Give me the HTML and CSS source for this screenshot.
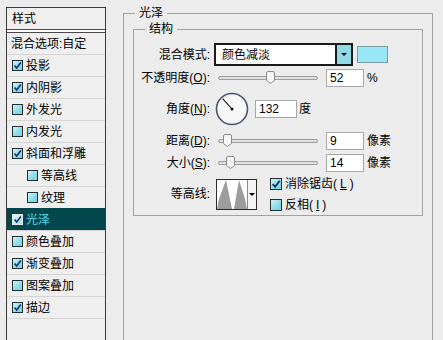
FILE: index.html
```html
<!DOCTYPE html>
<html lang="zh-CN">
<head>
<meta charset="utf-8">
<title>图层样式 - 光泽</title>
<link rel="stylesheet" href="styles.css">
</head>
<body>
<div class="dialog">
  <div class="styles-panel">
    <div class="panel-head">样式</div>
    <div class="panel-sep"></div>
    <div class="panel-blend">混合选项:自定</div>
    <div class="panel-row"><span class="cb"><svg viewBox="0 0 9 9" width="9" height="9"><path d="M1.5 4.5 L3.7 7 L7.8 1.5" fill="none" stroke="#10306a" stroke-width="1.6"/></svg></span>投影</div>
    <div class="panel-row"><span class="cb"><svg viewBox="0 0 9 9" width="9" height="9"><path d="M1.5 4.5 L3.7 7 L7.8 1.5" fill="none" stroke="#10306a" stroke-width="1.6"/></svg></span>内阴影</div>
    <div class="panel-row"><span class="cb"></span>外发光</div>
    <div class="panel-row"><span class="cb"></span>内发光</div>
    <div class="panel-row"><span class="cb"><svg viewBox="0 0 9 9" width="9" height="9"><path d="M1.5 4.5 L3.7 7 L7.8 1.5" fill="none" stroke="#10306a" stroke-width="1.6"/></svg></span>斜面和浮雕</div>
    <div class="panel-row sub"><span class="cb"></span>等高线</div>
    <div class="panel-row sub"><span class="cb"></span>纹理</div>
    <div class="panel-row sel"><span class="cb cb-sel"><svg viewBox="0 0 9 9" width="9" height="9"><path d="M1.5 4.5 L3.7 7 L7.8 1.5" fill="none" stroke="#10306a" stroke-width="1.6"/></svg></span>光泽</div>
    <div class="panel-row"><span class="cb"></span>颜色叠加</div>
    <div class="panel-row"><span class="cb"><svg viewBox="0 0 9 9" width="9" height="9"><path d="M1.5 4.5 L3.7 7 L7.8 1.5" fill="none" stroke="#10306a" stroke-width="1.6"/></svg></span>渐变叠加</div>
    <div class="panel-row"><span class="cb"></span>图案叠加</div>
    <div class="panel-row"><span class="cb"><svg viewBox="0 0 9 9" width="9" height="9"><path d="M1.5 4.5 L3.7 7 L7.8 1.5" fill="none" stroke="#10306a" stroke-width="1.6"/></svg></span>描边</div>
    <div class="panel-fill"></div>
  </div>

  <div class="main">
    <fieldset class="group outer">
      <legend>光泽</legend>
      <fieldset class="group inner">
        <legend>结构</legend>

        <div class="row r-blend">
          <span class="lbl">混合模式:</span>
          <div class="select">
            <span class="select-text">颜色减淡</span>
            <span class="select-btn"><span class="arrow"></span></span>
          </div>
          <span class="swatch"></span>
        </div>

        <div class="row r-opacity">
          <span class="lbl">不透明度(<u>O</u>):</span>
          <div class="slider"><svg class="thumb" style="left:47px" viewBox="0 0 9 13" width="9" height="13"><path d="M2 0.5 H7 A1.5 1.5 0 0 1 8.5 2 V9.5 L4.5 12.5 L0.5 9.5 V2 A1.5 1.5 0 0 1 2 0.5 Z" fill="#f6f6f6" stroke="#8c8c8c"/></svg></div>
          <span class="num">52</span>
          <span class="unit">%</span>
        </div>

        <div class="row r-angle">
          <span class="lbl">角度(<u>N</u>):</span>
          <svg class="dial" viewBox="0 0 34 34" width="34" height="34">
            <circle cx="17" cy="17" r="15.5" fill="#f7f7f7" stroke="#4b5170" stroke-width="1.6"/>
            <line x1="17" y1="17" x2="7.6" y2="6.6" stroke="#111" stroke-width="1.1"/>
            <circle cx="17" cy="17" r="1.5" fill="#111"/>
          </svg>
          <span class="num num-wide">132</span>
          <span class="unit unit-deg">度</span>
        </div>

        <div class="row r-dist">
          <span class="lbl">距离(<u>D</u>):</span>
          <div class="slider"><svg class="thumb" style="left:4px" viewBox="0 0 9 13" width="9" height="13"><path d="M2 0.5 H7 A1.5 1.5 0 0 1 8.5 2 V9.5 L4.5 12.5 L0.5 9.5 V2 A1.5 1.5 0 0 1 2 0.5 Z" fill="#f6f6f6" stroke="#8c8c8c"/></svg></div>
          <span class="num">9</span>
          <span class="unit">像素</span>
        </div>

        <div class="row r-size">
          <span class="lbl">大小(<u>S</u>):</span>
          <div class="slider"><svg class="thumb" style="left:7px" viewBox="0 0 9 13" width="9" height="13"><path d="M2 0.5 H7 A1.5 1.5 0 0 1 8.5 2 V9.5 L4.5 12.5 L0.5 9.5 V2 A1.5 1.5 0 0 1 2 0.5 Z" fill="#f6f6f6" stroke="#8c8c8c"/></svg></div>
          <span class="num">14</span>
          <span class="unit">像素</span>
        </div>

        <div class="row r-contour">
          <span class="lbl">等高线:</span>
          <div class="contour">
            <svg class="contour-graph" viewBox="0 0 30 29" width="30" height="29"><polygon points="0,29 2,19 9,0 15,29 17,29 22,0 28,19 30,29" fill="#9c9c9c"/></svg>
            <span class="contour-btn"><span class="arrow"></span></span>
          </div>
          <div class="checks">
            <div class="check-line"><span class="cb cb-form"><svg viewBox="0 0 9 9" width="10" height="10"><path d="M1.5 4.5 L3.7 7 L7.8 1.5" fill="none" stroke="#10306a" stroke-width="1.6"/></svg></span>消除锯齿(<u>L</u>)</div>
            <div class="check-line"><span class="cb cb-form"></span>反相(<u>I</u>)</div>
          </div>
        </div>
      </fieldset>
    </fieldset>
  </div>
</div>
</body>
</html>
```
FILE: styles.css
```css
html, body {
  margin: 0;
  padding: 0;
}
body {
  width: 443px;
  height: 340px;
  overflow: hidden;
  background: #ececec;
  color: #000;
  font: 12px/1 "Liberation Sans", "Noto Sans CJK SC", sans-serif;
}
u { text-decoration: underline; text-underline-offset: 1px; }

.dialog {
  display: flex;
  align-items: flex-start;
  padding: 6px 0 0 6px;
}

/* ---------- left styles list ---------- */
.styles-panel {
  flex: none;
  width: 100px;
  height: 333px;
  margin-top: 1px;
  box-sizing: border-box;
  border: 1px solid #3a3a3a;
  border-bottom: none;
  background: #efefef;
  display: flex;
  flex-direction: column;
}
.panel-head {
  height: 21px;
  display: flex;
  align-items: center;
  padding-left: 5px;
  border-bottom: 1px solid #4a4a4a;
}
.panel-sep {
  height: 2px;
  background: #f8f8f8;
  border-bottom: 1px solid #4a4a4a;
}
.panel-blend {
  height: 21px;
  display: flex;
  align-items: center;
  padding-left: 4px;
}
.panel-row {
  height: 22px;
  box-sizing: border-box;
  border-top: 1px solid #d4d4d4;
  display: flex;
  align-items: center;
  gap: 3px;
  padding-left: 5px;
}
.panel-row.sub { padding-left: 20px; }
.panel-row.sel {
  background: #03464b;
  border-top-color: #03464b;
  color: #58d8ef;
}
.panel-fill {
  flex: 1;
  border-top: 1px solid #d4d4d4;
}

.cb {
  flex: none;
  width: 11px;
  height: 11px;
  box-sizing: border-box;
  border: 1px solid #1f2f34;
  background: linear-gradient(135deg, #d4f5f9 0%, #8edde8 55%, #78d2de 100%);
  display: flex;
  align-items: center;
  justify-content: center;
}
.cb-sel {
  border-color: #e8e8e8;
  background: linear-gradient(135deg, #e6fbfd, #9fe3ec);
}
.cb-form {
  width: 12px;
  height: 12px;
}

/* ---------- right group boxes ---------- */
.main {
  margin-left: 17px;
}
.group {
  margin: 0;
  min-width: 0;
  border: 1px solid #a2a2a2;
}
.group > legend {
  padding: 0 4px;
  height: 14px;
  line-height: 14px;
}
.outer {
  width: 310px;
  height: 334px;
  box-sizing: border-box;
  border-bottom: none;
  padding: 2px 9px 0;
}
.outer > legend { margin-left: 2px; }
.inner {
  padding: 7px 0 4px;
}
.inner > legend { margin-left: 11px; }

.row {
  display: flex;
  align-items: center;
}
.lbl {
  flex: none;
  width: 76px;
  text-align: right;
  white-space: nowrap;
}
.r-blend { height: 23px; }
.r-opacity { height: 19px; margin-top: 2px; }
.r-angle { height: 34px; margin-top: 5px; }
.r-dist { height: 18px; margin-top: 6px; }
.r-size { height: 18px; margin-top: 4px; }
.r-contour { height: 34px; margin-top: 5px; }

/* select */
.select {
  margin-left: 4px;
  width: 139px;
  height: 23px;
  box-sizing: border-box;
  border: 2px solid #1a1a1a;
  background: #fff;
  display: flex;
  align-items: center;
}
.select-text {
  flex: 1;
  padding-left: 6px;
}
.select-btn {
  width: 14px;
  align-self: stretch;
  background: #8fdbe6;
  border-left: 2px solid #1a1a1a;
  display: flex;
  align-items: center;
  justify-content: center;
}
.arrow {
  width: 0;
  height: 0;
  border-left: 3px solid transparent;
  border-right: 3px solid transparent;
  border-top: 3px solid #000;
}
.swatch {
  margin-left: 4px;
  width: 31px;
  height: 17px;
  box-sizing: border-box;
  border: 1px solid #7c9ca3;
  background: #98e7f7;
}

/* slider */
.slider {
  position: relative;
  margin-left: 8px;
  width: 100px;
  height: 4px;
  box-sizing: border-box;
  border: 1px solid #9d9d9d;
  border-radius: 3px;
  background: #e2e2e2;
}
.thumb {
  position: absolute;
  top: -6px;
}

/* number fields */
.num {
  margin-left: 8px;
  width: 38px;
  height: 18px;
  box-sizing: border-box;
  border: 1px solid #a8a8a8;
  background: #fff;
  padding-left: 3px;
  display: flex;
  align-items: center;
}
.num-wide {
  width: 42px;
  margin-left: 6px;
}
.unit { margin-left: 3px; }
.unit-deg { margin-left: 2px; }

.dial {
  margin-left: 5px;
  flex: none;
}

/* contour */
.contour {
  margin-left: 6px;
  width: 41px;
  height: 31px;
  box-sizing: border-box;
  border: 1px solid #2a2a2a;
  background: #fff;
  display: flex;
  align-self: center;
}
.contour-graph { flex: none; }
.contour-btn {
  flex: 1;
  border-left: 1px solid #8a8a8a;
  background: #f4f4f4;
  display: flex;
  align-items: center;
  justify-content: center;
}
.checks {
  margin-left: 13px;
  display: flex;
  flex-direction: column;
  gap: 9px;
  align-self: flex-start;
  margin-top: 1px;
}
.check-line {
  display: flex;
  align-items: center;
  gap: 3px;
  height: 12px;
}
```
